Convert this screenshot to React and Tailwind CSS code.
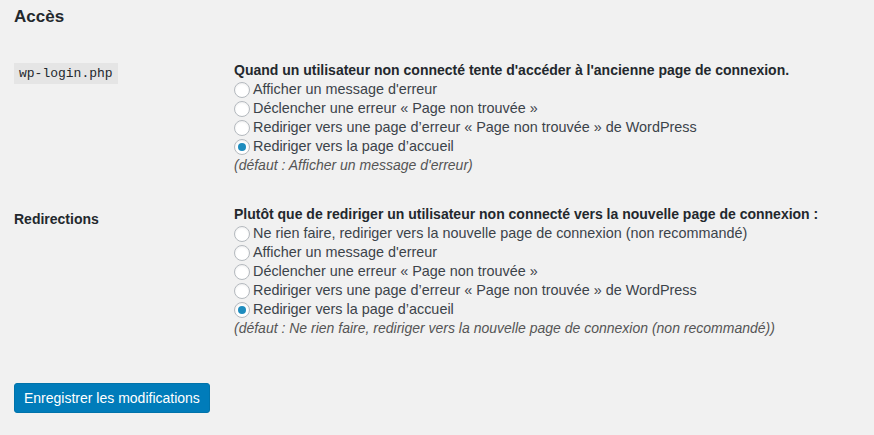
import React from 'react'

const Radio = ({ label, checked }) => (
  <label className="flex items-center h-[19px]">
    <span className="w-4 h-4 rounded-full border border-[#b4b9be] bg-white shadow-[inset_0_1px_2px_rgba(0,0,0,0.07)] flex items-center justify-center mr-[3px] shrink-0">
      {checked && <span className="w-2 h-2 rounded-full bg-[#1e8cbe]" />}
    </span>
    <span className="text-[14.4px]">{label}</span>
  </label>
)

const Section = ({ label, question, options, checked, note, code }) => (
  <div className="flex">
    <div className="w-[220px] shrink-0">
      {code ? (
        <code className="inline-block mt-[2px] bg-[#e5e5e5] px-[5px] h-[21px] leading-[21px] text-[13px] font-['Liberation_Mono',monospace] text-[#23282d]">
          {label}
        </code>
      ) : (
        <div className="pt-[4px] font-semibold text-[#23282d]">{label}</div>
      )}
    </div>
    <div className="flex flex-col leading-[19px]">
      <div className="font-semibold text-[#23282d]">{question}</div>
      {options.map((o, i) => (
        <Radio key={i} label={o} checked={i === checked} />
      ))}
      <p className="italic text-[14px] text-[#555]">{note}</p>
    </div>
  </div>
)

export default function App() {
  return (
    <div className="w-[874px] h-[435px] bg-[#f1f1f1] px-[14px] text-[14px] text-[#3c434a] font-['Liberation_Sans',Arial,sans-serif] overflow-hidden">
      <h2 className="pt-[5px] text-[17px] leading-[24px] font-semibold text-[#23282d]">Accès</h2>
      <div className="mt-[32px]">
        <Section
          code
          label="wp-login.php"
          question="Quand un utilisateur non connecté tente d'accéder à l'ancienne page de connexion."
          options={[
            "Afficher un message d'erreur",
            'Déclencher une erreur « Page non trouvée »',
            'Rediriger vers une page d’erreur « Page non trouvée » de WordPress',
            'Rediriger vers la page d’accueil',
          ]}
          checked={3}
          note="(défaut : Afficher un message d'erreur)"
        />
      </div>
      <div className="mt-[30px]">
        <Section
          label="Redirections"
          question="Plutôt que de rediriger un utilisateur non connecté vers la nouvelle page de connexion :"
          options={[
            'Ne rien faire, rediriger vers la nouvelle page de connexion (non recommandé)',
            "Afficher un message d'erreur",
            'Déclencher une erreur « Page non trouvée »',
            'Rediriger vers une page d’erreur « Page non trouvée » de WordPress',
            'Rediriger vers la page d’accueil',
          ]}
          checked={4}
          note="(défaut : Ne rien faire, rediriger vers la nouvelle page de connexion (non recommandé))"
        />
      </div>
      <button className="mt-[45px] h-[30px] px-[9px] rounded-[3px] bg-[#007cba] border border-[#0073aa] text-white text-[14px]">
        Enregistrer les modifications
      </button>
    </div>
  )
}
